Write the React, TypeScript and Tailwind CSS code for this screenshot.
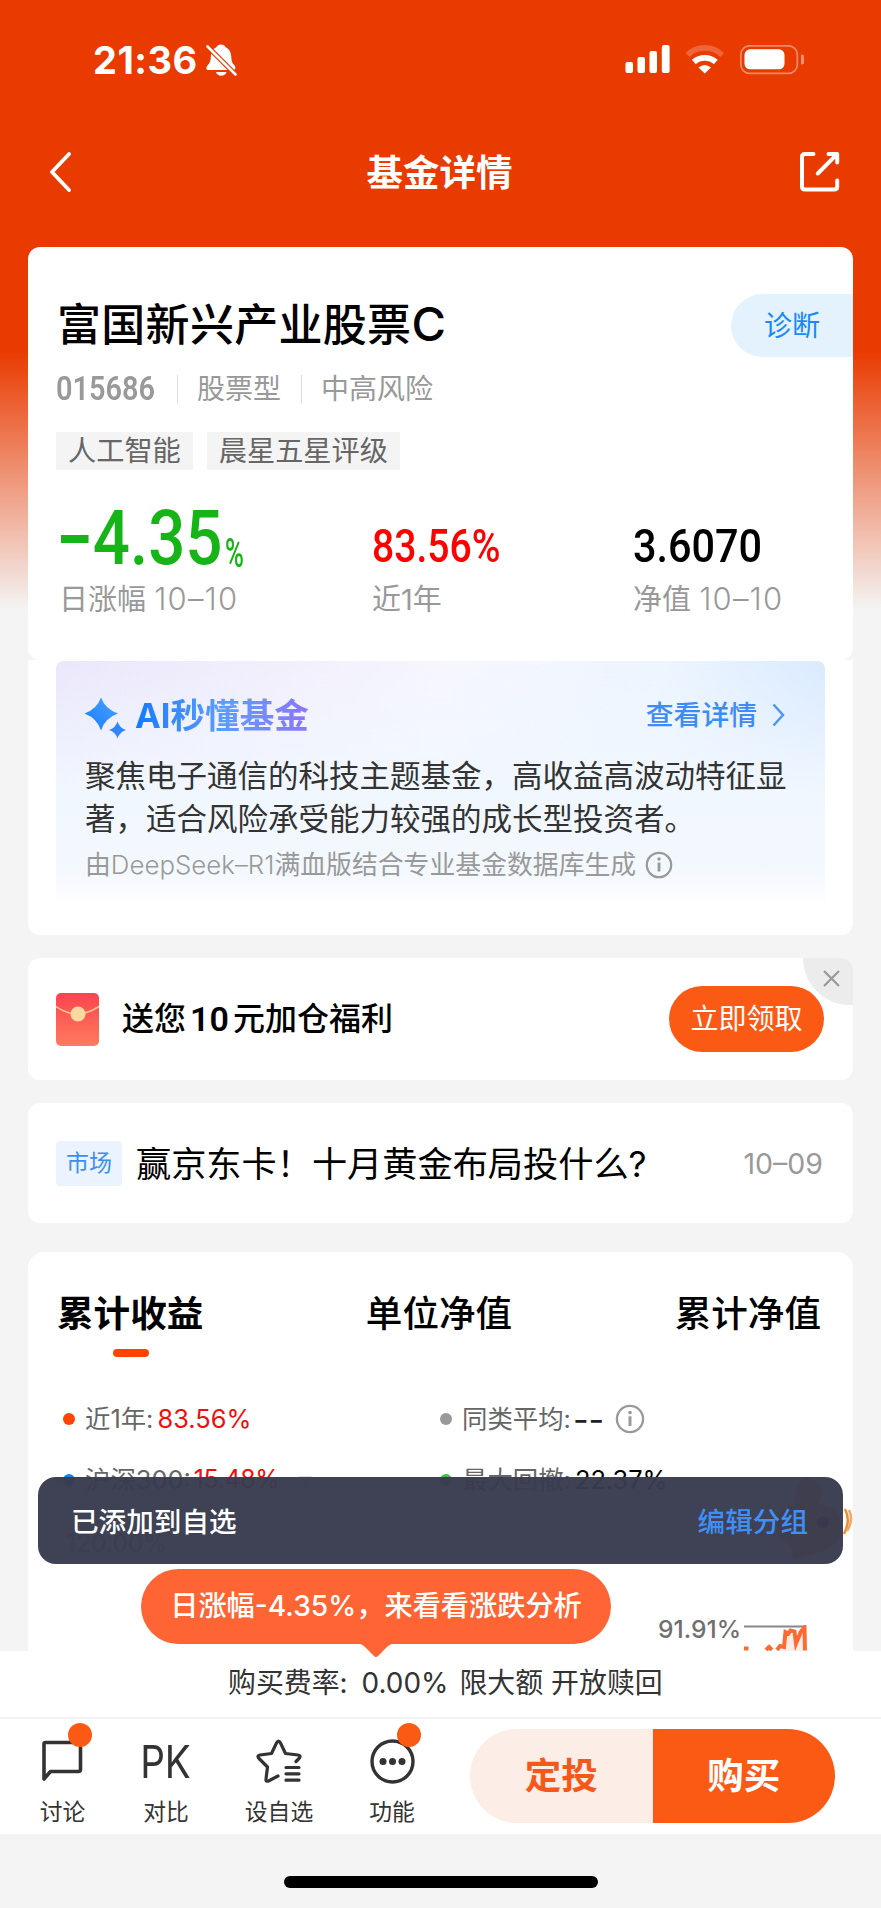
import type { ReactNode } from 'react';

const FONT = "font-['Inter','Noto_Sans_CJK_SC',sans-serif]";
const DIN = "font-['Roboto','Noto_Sans_CJK_SC',sans-serif]";

function BellOff() {
  return (
    <svg width="31" height="32" viewBox="0 0 31 32" className="ml-[8px]">
      <path d="M15 0.500c-2.400 0-4 1.200-4.600 2.800C6.500 4.800 5 8.500 4.800 13c0 4-1 6-3.300 8.500C0 23.500 0 26 2 26h25.500c2 0 2.500-2.500 1-4.500C26 19 25.500 17 25.300 13c-.3-4.500-2-8.200-5.700-9.700C19 1.700 17.400 0.500 15 0.500z" fill="#fff" />
      <path d="M10 28h10.500c-.8 2.500-2.700 3.800-5.200 3.800s-4.500-1.300-5.300-3.800z" fill="#fff" />
      <path d="M0 1L31 32" stroke="#e93a00" strokeWidth="5" />
      <path d="M1.500 2.500L29.500 30.500" stroke="#fff" strokeWidth="2.600" strokeLinecap="round" />
    </svg>
  );
}

function StatusBar() {
  return (
    <div className="flex h-[119px] items-center justify-between pl-[93px] pr-[77px]">
      <div className="flex items-center">
        <span className="text-[38px] leading-[44px] font-bold tracking-[0.500px] text-white">21:36</span>
        <BellOff />
      </div>
      <svg width="179" height="30" viewBox="0 0 179 30" fill="#fff">
        <rect x="0.500" y="17" width="7.500" height="11" rx="2" />
        <rect x="12.500" y="12" width="7.500" height="16" rx="2" />
        <rect x="24.500" y="6" width="7.500" height="22" rx="2" />
        <rect x="36.800" y="0" width="7.800" height="28" rx="2" />
        <path d="M62.300 10A25 25 0 0 1 97.200 10" stroke="#fff" strokeOpacity="0.220" strokeWidth="5.800" fill="none" />
        <path d="M68.800 17A16.500 16.500 0 0 1 90.800 17" stroke="#fff" strokeWidth="5.800" fill="none" />
        <path d="M79.800 28.500L73.500 22.500Q79.800 17.500 86 22.500z" />
        <rect x="115.800" y="0.800" width="56.500" height="27.600" rx="9" fill="none" stroke="#fff" strokeOpacity="0.400" strokeWidth="1.800" />
        <rect x="119.500" y="4.300" width="40" height="20" rx="5.500" />
        <path d="M176 9.500a5 5 0 0 1 0 10z" opacity="0.450" />
      </svg>
    </div>
  );
}

function Header() {
  return (
    <div className="flex h-[128px] items-start justify-between pr-[41px] pl-[49px]">
      <svg width="24" height="40" viewBox="0 0 24 40" className="mt-[33px] mr-[6px]" fill="none" stroke="#fff" strokeWidth="3.800" strokeLinecap="round" strokeLinejoin="round">
        <path d="M20 2L3 20L20 38" />
      </svg>
      <h1 className="mt-[32px] text-[36.500px] leading-[44px] font-bold text-white">基金详情</h1>
      <svg width="40" height="41" viewBox="0 0 40 41" className="mt-[32px]" fill="none" stroke="#fff" strokeWidth="4" strokeLinecap="round" strokeLinejoin="round">
        <path d="M13.500 3H5Q2 3 2 6V35.500Q2 38.500 5 38.500H34Q37.200 38.500 37.200 35.500V29.500" />
        <path d="M28.500 3H37.200V11.500M37 3.200L17.800 22.500" />
      </svg>
    </div>
  );
}

function InfoIcon({ size }: { size: number }) {
  return (
    <svg width={size} height={size} viewBox="0 0 28 28" fill="none">
      <circle cx="14" cy="14" r="12.200" stroke="#999" strokeWidth="2.200" />
      <circle cx="14" cy="8" r="1.700" fill="#999" />
      <path d="M14 11.500V20.500" stroke="#999" strokeWidth="2.800" />
    </svg>
  );
}

function Tag({ children }: { children: ReactNode }) {
  return <span className="flex h-[38px] items-center bg-[#f4f4f4] px-3 text-[28.200px] leading-[38px] text-[#666]">{children}</span>;
}

function FundSummary() {
  return (
    <div className="h-[413px] rounded-xl bg-white pt-[47px]">
      <div className="flex h-[63px] items-center justify-between">
        <h2 className="pl-[29px] text-[44px] leading-[63px] font-medium tracking-[0.300px] text-black">富国新兴产业股票<span className="text-[47px] leading-[44px]">C</span></h2>
        <span className="flex h-[63px] w-[122px] items-center rounded-l-full bg-[#e4f2fe] pl-[33px] text-[28px] text-[#1989fa]">诊断</span>
      </div>
      <div className="mt-[12px] flex h-[40px] items-center pl-[28px] text-[28px] text-[#999]">
        <span className={`${DIN} inline-block w-[98px] origin-left scale-x-[0.890] text-[32.500px] font-semibold`}>015686</span>
        <i className="ml-[23px] h-[28px] w-px bg-[#ddd]" />
        <span className="ml-[19px] leading-[40px]">股票型</span>
        <i className="ml-[20px] h-[28px] w-px bg-[#ddd]" />
        <span className="ml-[19px] leading-[40px]">中高风险</span>
      </div>
      <div className="mt-[23px] flex gap-[14px] pl-[28px]">
        <Tag>人工智能</Tag>
        <Tag>晨星五星评级</Tag>
      </div>
      <div className="mt-[26px] flex h-[80px] items-end pl-[33px]">
        <div className={`${DIN} flex h-[80px] w-[311px] items-start text-[#16b417]`}>
          <span className="mt-[2px] flex w-[164px] origin-left scale-x-[0.860] text-[76px] leading-[80px] font-medium">
            <i className="mt-[37px] mr-[5px] h-[8px] w-[32px] shrink-0 bg-[#16b417]" />4.35
          </span>
          <span className="mt-[28px] origin-left scale-x-[0.640] text-[40px] leading-[60px] font-medium">%</span>
        </div>
        <span className={`${DIN} w-[261px] origin-left scale-x-[0.850] text-[46px] leading-[59px] font-medium text-[#f00]`}>83.56%</span>
        <span className={`${DIN} origin-left scale-x-[0.900] text-[46px] leading-[59px] font-medium text-black`}>3.6070</span>
      </div>
      <div className="mt-[4px] flex h-[40px] items-center pl-[31px] text-[29px] leading-[40px] text-[#999]">
        <span className="w-[313px]">日涨幅 <span className="text-[31px] leading-[30px] font-light tracking-[1.200px]">10–10</span></span>
        <span className="w-[261px]">近1年</span>
        <span>净值 <span className="text-[31px] leading-[30px] font-light tracking-[1.200px]">10–10</span></span>
      </div>
    </div>
  );
}

function AiInsight() {
  return (
    <div className="h-[275px] rounded-b-xl bg-white px-[28px] pt-px">
      <div className="h-[246px] rounded-lg bg-[linear-gradient(to_bottom,transparent_0%,transparent_86%,#fff_100%),linear-gradient(to_bottom,transparent_0%,#f1f7ff_55%,#f5f9ff_100%),linear-gradient(100deg,#eae7fb_0%,#f1eefc_25%,#f6f6fe_48%,#edf5ff_75%,#d4e7ff_100%)] px-[29px] pt-[32px]">
        <div className="flex h-[44px] items-center">
          <svg width="42" height="42" viewBox="0 0 42 42" className="mt-[5px]">
            <defs>
              <linearGradient id="spark" x1="0" y1="1" x2="1" y2="0">
                <stop offset="0" stopColor="#1b7bff" />
                <stop offset="1" stopColor="#4aa3ff" />
              </linearGradient>
            </defs>
            <path d="M16 0.500Q20 12 33 16.500Q20 21 16 33.500Q12 21 -0.500 16.500Q12 12 16 0.500z" fill="url(#spark)" />
            <path d="M32.500 24.500Q34.500 31 41 33Q34.500 35 32.500 41.500Q30.500 35 24 33Q30.500 31 32.500 24.500z" fill="#2f86ff" />
          </svg>
          <span className="ml-[8px] bg-gradient-to-r from-[#0a7aff] via-[#5a9cff] to-[#8a76f8] bg-clip-text text-[34.600px] leading-[44px] font-bold text-transparent">AI秒懂基金</span>
          <span className="ml-auto text-[27.800px] leading-[44px] font-medium text-[#3d8cf5]">查看详情</span>
          <svg width="13" height="24" viewBox="0 0 13 24" className="mr-[11px] ml-[15px]" fill="none" stroke="#4a94f6" strokeWidth="2.400">
            <path d="M1.500 1.500L11 12L1.500 22.500" />
          </svg>
        </div>
        <p className="mt-[18px] w-[712px] text-[30.500px] leading-[42.500px] text-[#333]">
          聚焦电子通信的科技主题基金，高收益高波动特征显著，适合风险承受能力较强的成长型投资者。
        </p>
        <div className="mt-[5px] flex h-[40px] items-center gap-[9px] text-[25.850px] text-[#999]">
          <span className="whitespace-nowrap">由<span className="font-light">DeepSeek–R1</span>满血版结合专业基金数据库生成</span>
          <InfoIcon size={28} />
        </div>
      </div>
    </div>
  );
}

function CouponCard() {
  return (
    <div className="relative mt-[23px] flex h-[122px] items-center overflow-hidden rounded-xl bg-white pr-[29px] pl-[28px]">
      <svg width="43" height="53" viewBox="0 0 43 53">
        <defs>
          <linearGradient id="env" x1="0" y1="0" x2="0" y2="1">
            <stop offset="0" stopColor="#fb4350" />
            <stop offset="1" stopColor="#ff7b5e" />
          </linearGradient>
        </defs>
        <rect width="43" height="53" rx="5" fill="url(#env)" />
        <path d="M0 13.500Q21 28 43 13.500" fill="none" stroke="#fcc18c" strokeWidth="1.500" />
        <circle cx="22" cy="21" r="7.500" fill="#fdd9a0" />
      </svg>
      <span className="ml-[23px] flex items-center text-[32px] leading-[44px] font-medium text-black">
        送您<b className={`${DIN} mx-[4px] text-[34px] font-semibold`}>10</b>元加仓福利
      </span>
      <div className="absolute top-0 right-0 flex h-[47px] w-[50px] items-start justify-end rounded-bl-[50px] bg-[#ececec] pt-[12px] pr-[13px]">
        <svg width="17" height="17" viewBox="0 0 17 17" stroke="#999" strokeWidth="2.200">
          <path d="M1 1L16 16M16 1L1 16" />
        </svg>
      </div>
      <button className="relative ml-auto h-[66px] w-[155px] rounded-full bg-[#fb5a14] text-[28px] text-white">立即领取</button>
    </div>
  );
}

function NewsCard() {
  return (
    <div className="mt-[23px] flex h-[120px] items-center rounded-xl bg-white pr-[30px] pl-[28px]">
      <span className="flex h-[45px] w-[66px] items-center justify-center rounded bg-[#eaf3fe] text-[23px] text-[#3c8ff2]">市场</span>
      <span className="mt-[2px] ml-[14px] text-[35.200px] leading-[48px] whitespace-nowrap text-black">赢京东卡！十月黄金布局投什么?</span>
      <span className="mt-[2px] ml-auto text-[28.500px] text-[#999]">10–09</span>
    </div>
  );
}

function Legend({ dot, label, value, valueClass, children }: { dot: string; label: string; value: string; valueClass: string; children?: ReactNode }) {
  return (
    <div className="flex h-[40px] items-center text-[25.400px]">
      <i className={`mr-[10px] h-[12px] w-[12px] rounded-full ${dot}`} />
      <span className="text-[#666]">{label}</span>
      <span className={valueClass}>{value}</span>
      {children}
    </div>
  );
}

function ReturnsCard() {
  return (
    <div className="relative mt-[29px] h-[399px] rounded-t-2xl bg-white">
      <div className="flex justify-between px-[29px] pt-[40px] text-[36.600px] leading-[44px] font-medium text-black">
        <div className="flex flex-col items-center font-bold">
          累计收益
          <i className="mt-[13px] ml-[2px] h-[8px] w-[36px] rounded-full bg-[#ff4400]" />
        </div>
        <div>单位净值</div>
        <div className="pr-[3px]">累计净值</div>
      </div>
      <div className="mt-[42px] grid grid-cols-[377px_1fr] gap-y-[21px] pl-[35px]">
        <Legend dot="bg-[#ff4400]" label="近1年:" value="83.56%" valueClass="ml-[4px] text-[#f00d0d]" />
        <Legend dot="bg-[#999]" label="同类平均:" value="--" valueClass="ml-[2px] text-[34px] text-[#222]">
          <span className="ml-[11px]"><InfoIcon size={30} /></span>
        </Legend>
        <Legend dot="bg-[#1481ec]" label="沪深300:" value="15.48%" valueClass="ml-[3px] text-[25px] tracking-[-0.400px] text-[#f00d0d]">
          <svg width="14" height="9" viewBox="0 0 14 9" className="ml-[18px]"><path d="M0 0H14L7 9z" fill="#ddd" /></svg>
        </Legend>
        <Legend dot="bg-[#49b84f]" label="最大回撤:" value="22.37%" valueClass="ml-[4px] text-black" />
      </div>
      <div className="mt-[32px] pl-[38px] text-[24px] leading-[24px] font-medium text-[#888]">120.00%</div>
      <div className="mt-[49px] flex pl-[630px]">
        <span className="mt-[5px] w-[86px] text-[24.600px] leading-[38px] font-medium text-[#707070]">91.91%</span>
        <svg width="64" height="26" viewBox="0 0 64 26" className="mt-[20px]" fill="none">
          <path d="M38 26L42 8L56 10L61 2V26z" fill="#ffeee7" />
          <path d="M0 1.500H62" stroke="#888" strokeWidth="1.800" />
          <path d="M0 23.500h4.500M22 25l3-3 3 3M33 25l3-4 4 1 1.500-15 3 1.500 2-3 4 1 1.500 12 5-12 3.500-4 .500 23" stroke="#ff6a33" strokeWidth="4" />
        </svg>
      </div>
      {/* mascot floating at the card edge */}
      <svg width="80" height="90" viewBox="0 0 80 90" className="absolute top-[222px] right-0">
        <path d="M22 28Q22 8 32 4Q44 4 50 18L46 30zM4 50Q4 30 34 28Q68 30 68 52Q68 76 40 80L20 86L18 72Q4 66 4 50z" fill="#f0a070" />
        <circle cx="50" cy="48" r="6" fill="#123" />
        <path d="M72 35Q78 46 71 60" stroke="#f58a2a" strokeWidth="2.500" fill="none" />
        <path d="M76 36Q81 46 74 57" stroke="#f6a766" strokeWidth="2.500" fill="none" />
      </svg>
    </div>
  );
}

function NavItem({ label, dot, className, children }: { label: string; dot?: boolean; className: string; children: ReactNode }) {
  return (
    <div className={`relative flex flex-col items-center ${className}`}>
      <div className="flex h-[84px] items-center justify-center">{children}</div>
      <span className="-mt-[8px] text-[22.800px] leading-[34px] whitespace-nowrap text-[#333]">{label}</span>
      {dot && <i className="absolute top-[4px] left-1/2 ml-[5px] h-[24px] w-[24px] rounded-full bg-[#fb5a14]" />}
    </div>
  );
}

function BottomBar() {
  return (
    <div className="flex h-[117px] border-t-2 border-[#f2f2f2] bg-white">
      <NavItem label="讨论" dot className="ml-[28px] w-[69px]">
        <svg width="42" height="42" viewBox="0 0 42 42" className="mr-[2px]" fill="none" stroke="#333" strokeWidth="3.600" strokeLinejoin="round">
          <path d="M3 38.500V4Q3 2.500 4.500 2.500H37.500Q39.500 2.500 39.500 4.500V29.500Q39.500 31.500 37.500 31.500H9.500L3 39z" />
        </svg>
      </NavItem>
      <NavItem label="对比" className="ml-[34px] w-[70px]">
        <span className="mt-[1px] mr-[2px] scale-x-[0.860] text-[45px] leading-[44px] text-[#333]">PK</span>
      </NavItem>
      <NavItem label="设自选" className="ml-[38px] w-[80px]">
        <svg width="46" height="44" viewBox="0 0 46 44" fill="none" stroke="#333" strokeWidth="3.200" strokeLinecap="round" strokeLinejoin="round">
          <path d="M22 37L12.500 42Q9.500 43 10 40L11.500 28L3 19.500Q0.500 16.500 4 16L15.500 14.500L20.500 4Q22.500 0 24.500 4L29.500 14.500L42 16Q45.500 16.500 43 19.500L40 22.500" />
          <path d="M30 28.500H43M30 34.800H43M30 41.200H43" />
        </svg>
      </NavItem>
      <NavItem label="功能" dot className="ml-[38px] w-[70px]">
        <svg width="45" height="45" viewBox="0 0 45 45" fill="none">
          <circle cx="22.500" cy="22.500" r="20.500" stroke="#333" strokeWidth="3.400" />
          <circle cx="13" cy="22.500" r="3.500" fill="#333" />
          <circle cx="22.500" cy="22.500" r="3.500" fill="#333" />
          <circle cx="32" cy="22.500" r="3.500" fill="#333" />
        </svg>
      </NavItem>
      <div className="mt-[10px] ml-[43px] flex h-[94px] w-[365px] overflow-hidden rounded-full text-[36.500px] font-bold">
        <button className="flex-1 bg-[#fdede7] text-[#f4591b]">定投</button>
        <button className="flex-1 bg-[#fb5a14] text-white">购买</button>
      </div>
    </div>
  );
}

export default function App() {
  return (
    <div className={`${FONT} relative h-[1908px] w-[881px] overflow-hidden bg-[#f4f4f4]`}>
      <div className="h-[1651px] overflow-hidden bg-[linear-gradient(to_bottom,#e93a00_0px,#e93a00_350px,#f4f4f4_610px)]">
        <StatusBar />
        <Header />
        <main className="px-[28px]">
          <FundSummary />
          <AiInsight />
          <CouponCard />
          <NewsCard />
          <ReturnsCard />
        </main>
      </div>
      <div className="flex h-[66px] items-center bg-white pl-[228px] text-[27.900px] text-[#333]">
        <span>购买费率:</span>
        <span className="ml-[14px]">0.00%</span>
        <span className="ml-[11px]">限大额</span>
        <span className="ml-[8px]">开放赎回</span>
      </div>
      <BottomBar />
      <div className="mx-auto mt-[42px] h-[12px] w-[314px] rounded-full bg-black" />

      {/* toast */}
      <div className="absolute top-[1477px] left-[38px] flex h-[87px] w-[805px] items-center justify-between rounded-[18px] bg-[#393b4e]/97 pt-[3px] pr-[35px] pl-[33px] text-[27.600px] leading-[28px] font-medium">
        <span className="text-white">已添加到自选</span>
        <span className="text-[#3f8ff5]">编辑分组</span>
      </div>

      {/* analysis bubble */}
      <div className="absolute top-[1569px] left-[141px] flex w-[470px] flex-col items-center">
        <div className="flex h-[75px] w-full items-center justify-center rounded-full bg-[#ff6434] text-[28.200px] font-medium text-white">
          日涨幅-4.35%，来看看涨跌分析
        </div>
        <svg width="38" height="15" viewBox="0 0 38 15" className="-mt-px">
          <path d="M0 0H38Q32 1 27 7L21 13Q19 15 17 13L11 7Q6 1 0 0z" fill="#ff6434" />
        </svg>
      </div>
    </div>
  );
}
